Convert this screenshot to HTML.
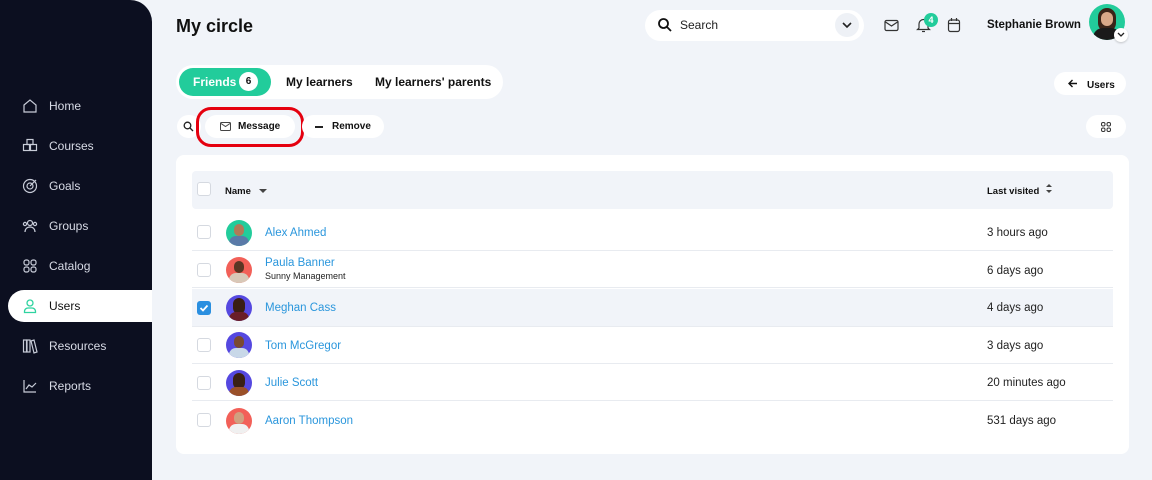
<!DOCTYPE html>
<html><head><meta charset="utf-8"><style>
*{box-sizing:border-box;margin:0;padding:0}
body{width:1152px;height:480px;background:#f1f4f9;font-family:"Liberation Sans",sans-serif;position:relative;overflow:hidden;color:#111}
.side{position:absolute;left:0;top:0;width:152px;height:480px;background:#0c0f20;border-top-right-radius:22px}
.nav{position:absolute;left:8px;width:144px;height:32px;display:flex;align-items:center;color:#d8dbe6;font-size:12px}
.nav svg{position:absolute;left:14px;top:8px}
.nav span{position:absolute;left:41px;top:9px}
.nav.act{background:#fff;border-radius:16px 0 0 16px;color:#111}
.abs{position:absolute}
.pill{position:absolute;background:#fff;border-radius:16px}
.b{font-weight:bold}
.row{position:absolute;left:192px;width:921px;height:37px;border-bottom:1px solid #e8ebf0}
.cb{position:absolute;left:5px;width:14px;height:14px;border:1px solid #d5d9e0;border-radius:3px;background:#fff}
.av{position:absolute;left:34px;width:26px;height:26px;border-radius:50%;overflow:hidden}
.nm{position:absolute;left:73px;color:#2a96dc;font-size:11.5px}
.lv{position:absolute;left:795px;font-size:11.5px;color:#222}
</style></head><body>
<div class="side">
 <div class="nav" style="top:90px"><svg width="16" height="16" viewBox="0 0 16 16" fill="none" stroke="#c8ccd8" stroke-width="1.2"><path d="M2 7L8 2l6 5v7H2z"/></svg><span>Home</span></div>
 <div class="nav" style="top:130px"><svg width="16" height="16" viewBox="0 0 16 16" fill="none" stroke="#c8ccd8" stroke-width="1.2"><rect x="5" y="1.5" width="6" height="5"/><rect x="1.5" y="6.5" width="6" height="6"/><rect x="8.5" y="6.5" width="6" height="6"/></svg><span>Courses</span></div>
 <div class="nav" style="top:170px"><svg width="16" height="16" viewBox="0 0 16 16" fill="none" stroke="#c8ccd8" stroke-width="1.2"><circle cx="8" cy="8" r="6.5"/><circle cx="8" cy="8" r="3"/><path d="M8 8l6-6"/></svg><span>Goals</span></div>
 <div class="nav" style="top:210px"><svg width="16" height="16" viewBox="0 0 16 16" fill="none" stroke="#c8ccd8" stroke-width="1.2"><circle cx="8" cy="5" r="2.5"/><path d="M3 14c0-3 2-5 5-5s5 2 5 5"/><circle cx="3" cy="6" r="1.6"/><circle cx="13" cy="6" r="1.6"/></svg><span>Groups</span></div>
 <div class="nav" style="top:250px"><svg width="16" height="16" viewBox="0 0 16 16" fill="none" stroke="#c8ccd8" stroke-width="1.2"><rect x="2" y="2" width="5" height="5" rx="2"/><rect x="9" y="2" width="5" height="5" rx="2"/><rect x="2" y="9" width="5" height="5" rx="2"/><rect x="9" y="9" width="5" height="5" rx="2"/></svg><span>Catalog</span></div>
 <div class="nav act" style="top:290px"><svg width="16" height="16" viewBox="0 0 16 16" fill="none" stroke="#2fd3a0" stroke-width="1.3"><circle cx="8" cy="5" r="3"/><path d="M2.5 14.5v-1c0-2 1.5-3.5 3.5-3.5h4c2 0 3.5 1.5 3.5 3.5v1z"/></svg><span>Users</span></div>
 <div class="nav" style="top:330px"><svg width="16" height="16" viewBox="0 0 16 16" fill="none" stroke="#c8ccd8" stroke-width="1.2"><rect x="1.5" y="2" width="3" height="12"/><rect x="5" y="2" width="3" height="12"/><path d="M9 3l3-1 3 12-3 1z"/></svg><span>Resources</span></div>
 <div class="nav" style="top:370px"><svg width="16" height="16" viewBox="0 0 16 16" fill="none" stroke="#c8ccd8" stroke-width="1.2"><path d="M2 2v12h12"/><path d="M4 11l3-4 3 2 4-4"/></svg><span>Reports</span></div>
</div>

<div class="abs b" style="left:176px;top:16px;font-size:18px">My circle</div>

<div class="pill" style="left:645px;top:10px;width:219px;height:31px"></div>
<svg class="abs" style="left:657px;top:17px" width="16" height="16" viewBox="0 0 16 16" fill="none" stroke="#111" stroke-width="1.8"><circle cx="6.5" cy="6.5" r="4.5"/><path d="M10 10l4 4"/></svg>
<div class="abs" style="left:680px;top:18px;font-size:12px;color:#222">Search</div>
<div class="abs" style="left:835px;top:13px;width:24px;height:24px;border-radius:50%;background:#eef1f6"></div>
<svg class="abs" style="left:841px;top:20px" width="12" height="10" viewBox="0 0 12 10" fill="none" stroke="#222" stroke-width="1.6"><path d="M2 3l4 4 4-4"/></svg>
<svg class="abs" style="left:884px;top:19px" width="15" height="13" viewBox="0 0 15 13" fill="none" stroke="#333" stroke-width="1.2"><rect x="1" y="1.5" width="13" height="10" rx="1.5"/><path d="M1.5 3l6 4 6-4"/></svg>
<svg class="abs" style="left:916px;top:17px" width="15" height="16" viewBox="0 0 15 16" fill="none" stroke="#333" stroke-width="1.2"><path d="M3 11V7a4.5 4.5 0 019 0v4l1.5 1.5h-12z"/><path d="M6 14.5h3"/></svg>
<div class="abs b" style="left:924px;top:13px;width:14px;height:14px;border-radius:50%;background:#22cc9b;color:#fff;font-size:9px;text-align:center;line-height:14px">4</div>
<svg class="abs" style="left:947px;top:17px" width="14" height="16" viewBox="0 0 14 16" fill="none" stroke="#333" stroke-width="1.2"><rect x="1.5" y="3" width="11" height="11.5" rx="2"/><path d="M1.5 6.5h11M4.5 1v3M9.5 1v3"/></svg>
<div class="abs b" style="left:987px;top:19px;font-size:11.5px">Stephanie Brown</div>
<div class="abs" style="left:1089px;top:4px;width:36px;height:36px;border-radius:50%;background:#22cc9b;overflow:hidden"><div style="position:absolute;left:9px;top:4px;width:18px;height:24px;border-radius:9px;background:#3a2418"></div><div style="position:absolute;left:12px;top:8px;width:12px;height:14px;border-radius:6px;background:#d8a888"></div><div style="position:absolute;left:4px;top:24px;width:28px;height:20px;border-radius:10px;background:#1a1a1a"></div></div>
<div class="abs" style="left:1114px;top:28px;width:14px;height:14px;border-radius:50%;background:#fff;box-shadow:0 1px 2px rgba(0,0,0,.2)"></div>
<svg class="abs" style="left:1117px;top:32px" width="8" height="6" viewBox="0 0 8 6" fill="none" stroke="#222" stroke-width="1.3"><path d="M1 1l3 3 3-3"/></svg>

<div class="pill" style="left:176px;top:65px;width:327px;height:34px;border-radius:17px"></div>
<div class="abs b" style="left:179px;top:68px;width:92px;height:28px;border-radius:14px;background:#22cc9b;color:#fff;font-size:12px;padding:7px 0 0 14px">Friends</div>
<div class="abs b" style="left:239px;top:72px;width:19px;height:19px;border-radius:50%;background:#fff;font-size:10px;text-align:center;line-height:19px">6</div>
<div class="abs b" style="left:286px;top:75px;font-size:12px">My learners</div>
<div class="abs b" style="left:375px;top:75px;font-size:12px">My learners' parents</div>

<div class="pill" style="left:1054px;top:72px;width:72px;height:23px;border-radius:12px"></div>
<svg class="abs" style="left:1068px;top:79px" width="10" height="9" viewBox="0 0 10 9" fill="none" stroke="#111" stroke-width="1.4"><path d="M9 4.5H1.5M4.5 1L1 4.5 4.5 8"/></svg>
<div class="abs b" style="left:1087px;top:80px;font-size:10px">Users</div>

<div class="pill" style="left:177px;top:115px;width:24px;height:23px;border-radius:12px"></div>
<svg class="abs" style="left:183px;top:121px" width="11" height="11" viewBox="0 0 11 11" fill="none" stroke="#222" stroke-width="1.3"><circle cx="4.5" cy="4.5" r="3.3"/><path d="M7 7l3 3"/></svg>
<div class="pill" style="left:205px;top:115px;width:90px;height:23px;border-radius:12px"></div>
<div class="abs" style="left:196px;top:107px;width:108px;height:40px;border:3.5px solid #e5000f;border-radius:15px"></div>
<svg class="abs" style="left:220px;top:122px" width="11" height="9" viewBox="0 0 11 9" fill="none" stroke="#444" stroke-width="1"><rect x=".5" y=".5" width="10" height="8" rx="1"/><path d="M1 1.5l4.5 3 4.5-3"/></svg>
<div class="abs b" style="left:238px;top:121px;font-size:10px">Message</div>
<div class="pill" style="left:302px;top:115px;width:82px;height:23px;border-radius:12px"></div>
<div class="abs" style="left:315px;top:126px;width:8px;height:1.5px;background:#222"></div>
<div class="abs b" style="left:332px;top:121px;font-size:10px">Remove</div>

<div class="pill" style="left:1086px;top:115px;width:40px;height:23px;border-radius:12px"></div>
<svg class="abs" style="left:1101px;top:122px" width="10" height="10" viewBox="0 0 10 10" fill="none" stroke="#333" stroke-width="1"><rect x=".5" y=".5" width="3.5" height="3.5" rx="1.5"/><rect x="6" y=".5" width="3.5" height="3.5" rx="1.5"/><rect x=".5" y="6" width="3.5" height="3.5" rx="1.5"/><rect x="6" y="6" width="3.5" height="3.5" rx="1.5"/></svg>

<div class="abs" style="left:176px;top:155px;width:953px;height:299px;background:#fff;border-radius:8px"></div>
<div class="abs" style="left:192px;top:171px;width:921px;height:38px;background:#f1f4f9;border-radius:4px"></div>
<div class="cb" style="left:197px;top:182px"></div>
<div class="abs b" style="left:225px;top:186px;font-size:9.5px">Name</div>
<div class="abs" style="left:259px;top:189px;width:0;height:0;border-left:4px solid transparent;border-right:4px solid transparent;border-top:4px solid #444"></div>
<div class="abs b" style="left:987px;top:186px;font-size:9.5px">Last visited</div>
<div class="abs" style="left:1046px;top:184px;border-left:3.5px solid transparent;border-right:3.5px solid transparent;border-bottom:3.5px solid #444"></div>
<div class="abs" style="left:1046px;top:190px;border-left:3.5px solid transparent;border-right:3.5px solid transparent;border-top:3.5px solid #444"></div>

<div class="row" style="top:214px"><div class="cb" style="top:11px"></div><div class="av" style="top:6px;background:#22cc9b"><div style="position:absolute;left:8px;top:4px;width:10px;height:12px;border-radius:5px;background:#b07a58"></div><div style="position:absolute;left:3px;top:16px;width:20px;height:14px;border-radius:8px;background:#5a7aa8"></div></div><div class="nm" style="top:13px">Alex Ahmed</div><div class="lv" style="top:13px">3 hours ago</div></div>
<div class="row" style="top:251px"><div class="cb" style="top:12px"></div><div class="av" style="top:6px;background:#f26058"><div style="position:absolute;left:8px;top:4px;width:10px;height:12px;border-radius:5px;background:#5a3624"></div><div style="position:absolute;left:3px;top:16px;width:20px;height:14px;border-radius:8px;background:#d8c8b8"></div></div><div class="nm" style="top:6px">Paula Banner</div><div class="abs" style="left:73px;top:20px;font-size:9px;color:#222">Sunny Management</div><div class="lv" style="top:14px">6 days ago</div></div>
<div class="row" style="top:289px;background:#f1f4f9;height:38px"><div class="abs" style="left:5px;top:12px;width:14px;height:14px;border-radius:3px;background:#2a8fe0"></div><svg class="abs" style="left:7px;top:14px" width="10" height="10" viewBox="0 0 10 10" fill="none" stroke="#fff" stroke-width="1.8"><path d="M1.5 5l2.5 2.5 4.5-5"/></svg><div class="av" style="top:6px;background:#5548e0"><div style="position:absolute;left:7px;top:3px;width:12px;height:16px;border-radius:6px;background:#3a1e14"></div><div style="position:absolute;left:3px;top:17px;width:20px;height:14px;border-radius:8px;background:#6a1e28"></div></div><div class="nm" style="top:13px">Meghan Cass</div><div class="lv" style="top:13px">4 days ago</div></div>
<div class="row" style="top:327px"><div class="cb" style="top:11px"></div><div class="av" style="top:5px;background:#5548e0"><div style="position:absolute;left:8px;top:4px;width:10px;height:12px;border-radius:5px;background:#7a4a30"></div><div style="position:absolute;left:3px;top:16px;width:20px;height:14px;border-radius:8px;background:#c8d8e8"></div></div><div class="nm" style="top:13px">Tom McGregor</div><div class="lv" style="top:13px">3 days ago</div></div>
<div class="row" style="top:364px"><div class="cb" style="top:12px"></div><div class="av" style="top:6px;background:#5548e0"><div style="position:absolute;left:7px;top:3px;width:12px;height:16px;border-radius:6px;background:#3a2014"></div><div style="position:absolute;left:3px;top:17px;width:20px;height:14px;border-radius:8px;background:#9a5028"></div></div><div class="nm" style="top:13px">Julie Scott</div><div class="lv" style="top:13px">20 minutes ago</div></div>
<div class="row" style="top:402px;border-bottom:none"><div class="cb" style="top:11px"></div><div class="av" style="top:6px;background:#f26058"><div style="position:absolute;left:8px;top:4px;width:10px;height:12px;border-radius:5px;background:#d0a080"></div><div style="position:absolute;left:3px;top:16px;width:20px;height:14px;border-radius:8px;background:#f0f0f0"></div></div><div class="nm" style="top:13px">Aaron Thompson</div><div class="lv" style="top:13px">531 days ago</div></div>
</body></html>
